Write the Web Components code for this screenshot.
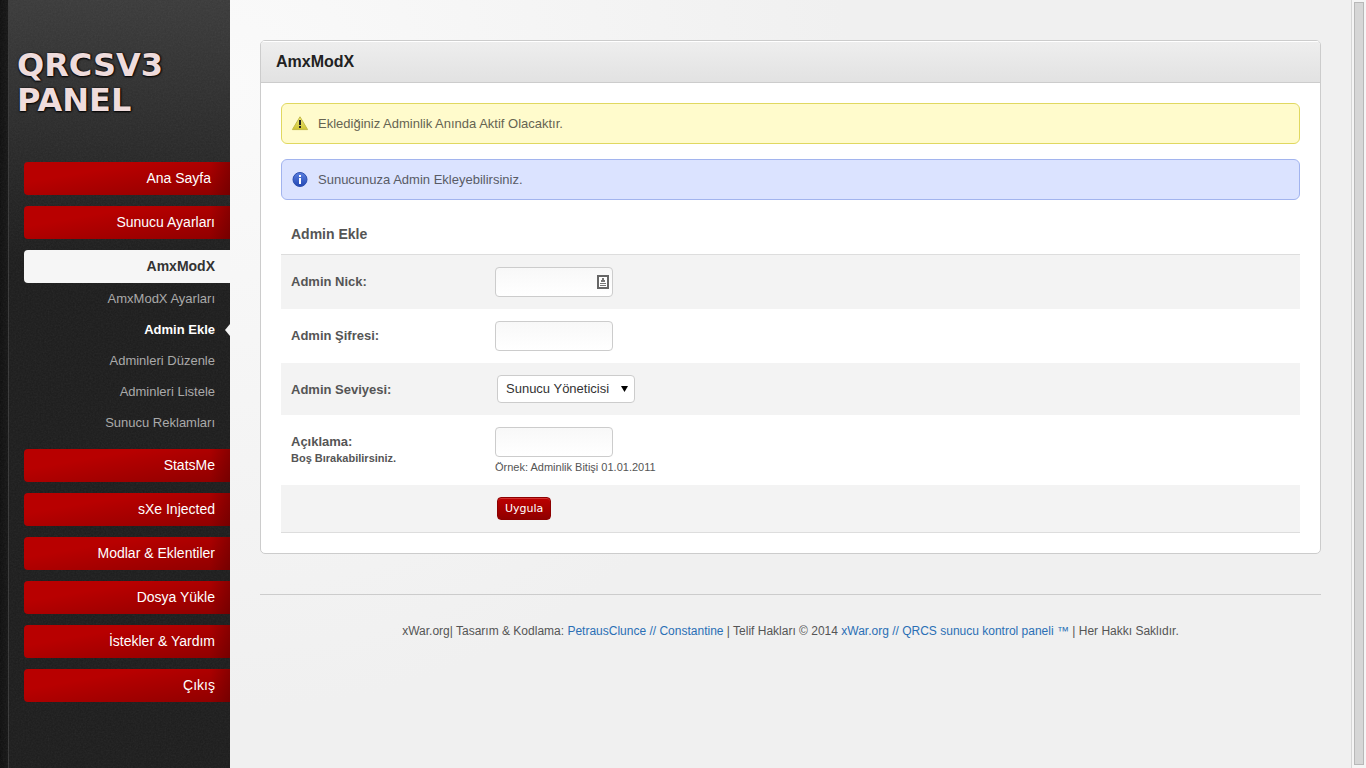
<!DOCTYPE html>
<html lang="tr">
<head>
<meta charset="utf-8">
<title>QRCSV3 Panel - AmxModX</title>
<style>
html,body{height:100%}
body{margin:0;background:#f0f0f0;color:#555;font:13px/20px "Liberation Sans",Arial,sans-serif}
</style>
</head>
<body>
<qr-app>
  <qr-sidebar slot="side">
    <qr-nav-item label="Ana Sayfa" lone></qr-nav-item>
    <qr-nav-item label="Sunucu Ayarları"></qr-nav-item>
    <qr-nav-item label="AmxModX" current>
      <qr-sub-item label="AmxModX Ayarları"></qr-sub-item>
      <qr-sub-item label="Admin Ekle" current></qr-sub-item>
      <qr-sub-item label="Adminleri Düzenle"></qr-sub-item>
      <qr-sub-item label="Adminleri Listele"></qr-sub-item>
      <qr-sub-item label="Sunucu Reklamları"></qr-sub-item>
    </qr-nav-item>
    <qr-nav-item label="StatsMe"></qr-nav-item>
    <qr-nav-item label="sXe Injected"></qr-nav-item>
    <qr-nav-item label="Modlar &amp; Eklentiler"></qr-nav-item>
    <qr-nav-item label="Dosya Yükle"></qr-nav-item>
    <qr-nav-item label="İstekler &amp; Yardım"></qr-nav-item>
    <qr-nav-item label="Çıkış"></qr-nav-item>
  </qr-sidebar>
  <qr-card heading="AmxModX">
    <qr-notice kind="warning">Eklediğiniz Adminlik Anında Aktif Olacaktır.</qr-notice>
    <qr-notice kind="info">Sunucunuza Admin Ekleyebilirsiniz.</qr-notice>
    <qr-admin-form></qr-admin-form>
  </qr-card>
  <qr-footer></qr-footer>
</qr-app>
<script>
class Base extends HTMLElement {
  connectedCallback() {
    if (this.shadowRoot) return;
    this.attachShadow({mode: 'open'}).innerHTML = this.view();
  }
  esc(name) {
    return this.getAttribute(name).replace(/&/g, '&amp;').replace(/</g, '&lt;');
  }
}

customElements.define('qr-app', class extends Base {
  view() { return `<style>
    :host{display:flex;min-height:100vh;background:radial-gradient(circle 620px at 230px 90px,#fafafa,#f0f0f0)}
    main{flex:1;min-width:0;padding:40px 30px}
    slot[name=side]{display:contents}
  </style>
  <slot name="side"></slot><main><slot></slot></main><qr-scrollbar></qr-scrollbar>`; }
});

customElements.define('qr-scrollbar', class extends Base {
  view() { return `<style>
    :host{display:flex;box-sizing:border-box;width:15px;padding:2px 2px 3px;background:#f5f5f5;border-left:1px solid #d5d5d5}
    div{flex:1;box-sizing:border-box;background:#d6d6d6;border:1px solid #b8b8b8}
  </style><div></div>`; }
});

customElements.define('qr-sidebar', class extends Base {
  view() { return `<style>
    :host{display:flex;position:relative;flex-direction:column;box-sizing:border-box;width:230px;
      background:linear-gradient(#3a3a3a,#222 200px,#1c1c1c 260px)}
    .edge{position:absolute;inset:0 auto 0 0;width:8px;background:linear-gradient(90deg,#0e0e0e,#151515);border-right:1px solid #383838}
    .grain{position:absolute;inset:0;width:100%;height:100%;opacity:.08}
    .logo{position:relative;box-sizing:border-box;height:162px;padding:48px 0 0 17px;margin:0;font:bold 32px/35px "DejaVu Sans",Verdana,sans-serif;
      color:#efdcdc;text-shadow:0 1px 2px #000,1px 0 2px #000}
    .logo a{color:inherit;text-decoration:none}
    nav{position:relative;display:flex;flex-direction:column;gap:11px;padding-left:24px}
  </style>
  <div class="edge"></div>
  <svg class="grain" aria-hidden="true"><filter id="n"><feTurbulence type="fractalNoise" baseFrequency=".6" numOctaves="2"/><feColorMatrix type="saturate" values="0"/></filter><rect width="100%" height="100%" filter="url(#n)"/></svg>
  <h1 class="logo"><a href="#">QRCSV3<br>PANEL</a></h1>
  <nav><slot></slot></nav>`; }
});

customElements.define('qr-nav-item', class extends Base {
  view() { return `<style>
    :host{display:block}
    a{display:block;padding:0 15px;border-radius:4px 0 0 4px;font-size:14px;line-height:33px;text-align:right;text-decoration:none;
      color:#fff;background:linear-gradient(90deg,transparent 90%,rgba(60,0,0,.3)),linear-gradient(170deg,#b80000 30%,#8e0000)}
    :host([lone]) a{padding-right:19px}
    :host([current]) a{color:#333;background:#f6f6f6;font-weight:bold}
    .sub{display:flex;flex-direction:column}
  </style><a href="#">${this.esc('label')}</a><div class="sub"><slot></slot></div>`; }
});

customElements.define('qr-sub-item', class extends Base {
  view() { return `<style>
    :host{display:block;position:relative}
    a{display:block;padding-right:15px;line-height:31px;text-align:right;text-decoration:none;color:#aaa}
    :host([current]) a{color:#fff;font-weight:bold}
    :host([current])::after{content:"";position:absolute;right:0;top:10px;border:6px solid transparent;border-right:5px solid #f4f4f4;border-left:0}
  </style><a href="#">${this.esc('label')}</a>`; }
});

customElements.define('qr-card', class extends Base {
  view() { return `<style>
    :host{display:block;background:#fff;border:1px solid #ccc;border-radius:5px;overflow:hidden}
    h2{margin:0;padding:1px 15px 0;font-size:16px;line-height:40px;color:#222;border-bottom:1px solid #ccc;
      background:linear-gradient(#eee,#e2e2e2);box-shadow:inset 0 1px #fff}
    .body{display:flex;flex-direction:column;gap:15px;padding:20px}
  </style><h2>${this.esc('heading')}</h2><div class="body"><slot></slot></div>`; }
});

const ICONS = {
  warning: `<svg width="18" height="18" viewBox="0 0 18 18" aria-hidden="true"><defs><linearGradient id="g" x2="0" y2="1"><stop stop-color="#f2ec7c"/><stop offset="1" stop-color="#cfc434"/></linearGradient></defs><path d="M9 1.800 16.600 14.600H1.400Z" fill="url(#g)" stroke="#c4ba48" stroke-linejoin="round"/><path d="M8 5h2v5H8zM8 11h2v2H8z" fill="#222"/></svg>`,
  info: `<svg width="18" height="18" viewBox="0 0 18 18" aria-hidden="true"><defs><linearGradient id="g" x2="0" y2="1"><stop stop-color="#5b80e0"/><stop offset="1" stop-color="#2348b4"/></linearGradient></defs><circle cx="9" cy="8.500" r="7" fill="url(#g)" stroke="#2d4fae"/><path d="M8 4h2v2H8zM8 7h2v6H8z" fill="#fff"/></svg>`
};

customElements.define('qr-notice', class extends Base {
  view() { const k = this.getAttribute('kind'); return `<style>
    :host{display:flex;align-items:center;gap:9px;box-sizing:border-box;min-height:41px;padding:9px;border:1px solid;border-radius:6px}
    :host([kind=warning]){background:#fffbcc;border-color:#e0d860;color:#666452}
    :host([kind=info]){background:#dbe3ff;border-color:#a2b4ee;color:#585b66}
    svg{display:block}
  </style>${ICONS[k]}<span><slot></slot></span>`; }
});

customElements.define('qr-admin-form', class extends Base {
  view() { return `<style>
    :host{display:block}
    table{width:100%;border-collapse:separate;border-spacing:0}
    caption{padding:9px 10px 10px;font-size:14px;line-height:20px;font-weight:bold;text-align:left}
    tbody th,tbody td{padding:12px 10px;text-align:left;vertical-align:top}
    tbody th{width:184px;font-weight:bold}
    tbody tr:nth-child(odd)>*{background:#f3f3f3}
    tbody tr:first-child>*{border-top:1px solid #ddd}
    tbody tr:last-child>*{border-bottom:1px solid #ddd}
    label,small{display:block}
    label{padding-top:5px}
    input{display:block;box-sizing:border-box;width:118px;height:30px;padding:5px 6px;border:1px solid #ccc;border-radius:4px;
      background:linear-gradient(#f8f8f8,#fff);font:inherit;color:#333;outline:0}
    .field{position:relative;width:118px}
    .field svg{position:absolute;right:4px;top:8px}
    small{font-size:11px;line-height:12px}
    .tip{padding-top:4px}
    td select{appearance:none;display:block;box-sizing:border-box;width:138px;height:28px;margin:0 2px;padding:0 8px;border:1px solid #ccc;border-radius:4px;
      font:inherit;color:#333;background:#fff url("data:image/svg+xml,%3Csvg xmlns='http://www.w3.org/2000/svg' width='7' height='6'%3E%3Cpath d='M0 0h7L3.500 6z'/%3E%3C/svg%3E") no-repeat right 6px center}
    button{display:block;box-sizing:border-box;height:23px;margin:0 2px;padding:0 7px;border:1px solid #8d0000;border-radius:4px;
      font:11px/21px "DejaVu Sans",Verdana,sans-serif;color:#fff;background:linear-gradient(#bd0000,#8f0000);box-shadow:inset 0 1px #d43030}
  </style>
  <form><table>
    <caption>Admin Ekle</caption>
    <tbody>
      <tr><th scope="row"><label for="nick">Admin Nick:</label></th><td><div class="field"><input id="nick" type="text">
        <svg width="12" height="14" viewBox="0 0 12 14" aria-hidden="true"><rect x="1" y="1" width="10" height="12" fill="#fff" stroke="#666" stroke-width="2"/><path d="M5 3h2v2h1v2H4V5h1zM3 8h6v1H3zM3 10h6v1H3z" fill="#777"/></svg></div></td></tr>
      <tr><th scope="row"><label for="pass">Admin Şifresi:</label></th><td><input id="pass" type="text"></td></tr>
      <tr><th scope="row"><label for="level">Admin Seviyesi:</label></th><td><select id="level"><option>Sunucu Yöneticisi</option></select></td></tr>
      <tr><th scope="row"><label for="note">Açıklama:<small>Boş Bırakabilirsiniz.</small></label></th><td><input id="note" type="text"><small class="tip">Örnek: Adminlik Bitişi 01.01.2011</small></td></tr>
      <tr><th></th><td><button type="button">Uygula</button></td></tr>
    </tbody>
  </table></form>`; }
});

customElements.define('qr-footer', class extends Base {
  view() { return `<style>
    :host{display:block;margin-top:40px;padding-top:26px;border-top:1px solid #ccc;font-size:12px;line-height:20px;text-align:center}
    a{color:#2a6fb5;text-decoration:none}
  </style>xWar.org| Tasarım &amp; Kodlama: <a href="#">PetrausClunce // Constantine</a> | Telif Hakları © 2014 <a href="#">xWar.org // QRCS sunucu kontrol paneli ™</a> | Her Hakkı Saklıdır.`; }
});
</script>
</body>
</html>
